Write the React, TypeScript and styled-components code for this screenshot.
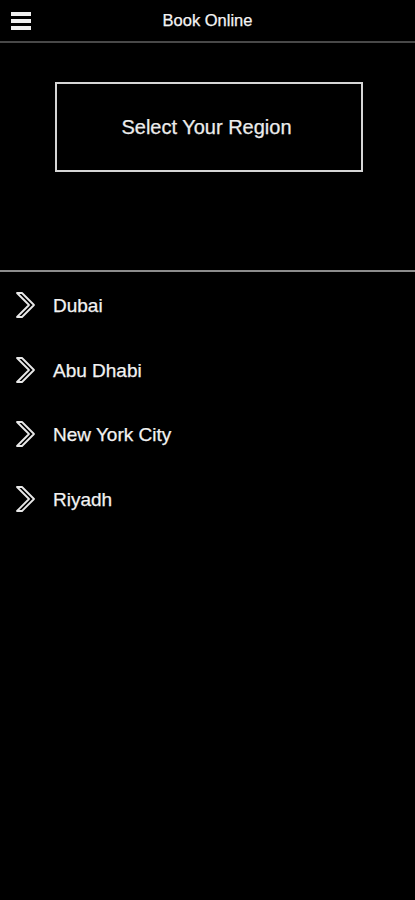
import styled, { createGlobalStyle } from 'styled-components';

const regions = ['Dubai', 'Abu Dhabi', 'New York City', 'Riyadh'];

export default function App() {
  return (
    <>
      <GlobalStyle />
      <Page>
        <Header>
          <MenuButton aria-label="Menu">
            <MenuBar />
            <MenuBar />
            <MenuBar />
          </MenuButton>
          <Title>Book Online</Title>
        </Header>
        <Hero>
          <RegionBox>Select Your Region</RegionBox>
        </Hero>
        <RegionList>
          {regions.map((name) => (
            <RegionItem key={name}>
              <Chevron />
              <RegionName>{name}</RegionName>
            </RegionItem>
          ))}
        </RegionList>
      </Page>
    </>
  );
}

function Chevron() {
  return (
    <ChevronSvg width="22" height="28" viewBox="0 0 22 28">
      <polygon
        points="2,2 7,2 19,14 7,26 2,26 14,14"
        fill="none"
        stroke="#e8e8e8"
        strokeWidth="1.8"
        strokeLinejoin="round"
      />
    </ChevronSvg>
  );
}

const GlobalStyle = createGlobalStyle`
  html, body {
    margin: 0;
    padding: 0;
    background: #000;
  }

  body {
    font-family: 'Liberation Sans', Arial, sans-serif;
    color: #f2f2f2;
    -webkit-text-stroke: 0.25px currentColor;
  }
`;

const Page = styled.div`
  width: 415px;
  min-height: 900px;
  background: #000;
`;

const Header = styled.header`
  position: relative;
  height: 41px;
  display: flex;
  align-items: center;
  justify-content: center;
  border-bottom: 2px solid #484848;
`;

const MenuButton = styled.div`
  position: absolute;
  left: 11px;
  top: 12px;
  display: flex;
  flex-direction: column;
  gap: 3px;
`;

const MenuBar = styled.span`
  display: block;
  width: 20px;
  height: 4px;
  background: #f0f0f0;
`;

const Title = styled.h1`
  margin: 0;
  font-size: 16.5px;
  font-weight: normal;
  color: #f4f4f4;
  line-height: 41px;
`;

const Hero = styled.section`
  display: flex;
  justify-content: center;
  padding: 39px 0 98px 2px;
  border-bottom: 2px solid #8c8c8c;
`;

const RegionBox = styled.div`
  box-sizing: border-box;
  width: 308px;
  height: 90px;
  border: 2px solid #d6d6d6;
  display: flex;
  align-items: center;
  justify-content: center;
  padding-right: 4px;
  font-size: 20px;
  color: #ececec;
`;

const RegionList = styled.ul`
  list-style: none;
  margin: 0;
  padding: 2px 0 0;
`;

const RegionItem = styled.li`
  height: 64.5px;
  display: flex;
  align-items: center;
  padding-left: 15px;
  gap: 16px;
`;

const ChevronSvg = styled.svg`
  flex-shrink: 0;
  margin-top: -2px;
`;

const RegionName = styled.span`
  font-size: 19px;
  color: #f2f2f2;
`;
